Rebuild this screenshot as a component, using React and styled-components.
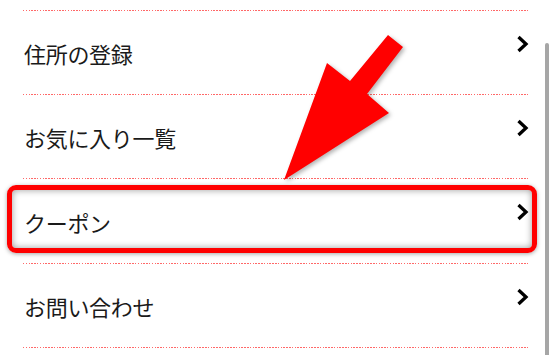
import styled, { createGlobalStyle } from 'styled-components';

const GlobalStyle = createGlobalStyle`
  html, body {
    margin: 0;
    padding: 0;
    background: #fff;
  }
  body {
    font-family: "Noto Sans CJK JP", "Noto Sans", sans-serif;
    color: #1a1a1a;
  }
`;

const items = [
  { label: '住所の登録' },
  { label: 'お気に入り一覧' },
  { label: 'クーポン', highlighted: true },
  { label: 'お問い合わせ' },
];

export default function App() {
  return (
    <>
      <GlobalStyle />
      <Page>
        <MenuList>
          {items.map(item => (
            <MenuRow key={item.label} $highlighted={item.highlighted}>
              <Label>{item.label}</Label>
              <Chevron />
            </MenuRow>
          ))}
        </MenuList>
        <PointerArrow />
        <ScrollThumb />
      </Page>
    </>
  );
}

function Chevron() {
  return (
    <ChevronIcon width="13" height="18" viewBox="0 0 13 18">
      <polyline points="2.5,2 10,9 2.5,16" />
    </ChevronIcon>
  );
}

function PointerArrow() {
  return (
    <ArrowSvg width="553" height="355" viewBox="0 0 553 355">
      <polygon points="388,35 403,47 367,94 389,113 284,180 327,63 350,81" />
    </ArrowSvg>
  );
}

const dots = `repeating-linear-gradient(
  to right,
  #ff6868 0,
  #ff6868 1.5px,
  transparent 1.5px,
  transparent 2.8px
)`;

const Page = styled.div`
  position: relative;
  width: 553px;
  height: 355px;
  overflow: hidden;
`;

const MenuList = styled.ul`
  list-style: none;
  margin: 10px 0 0 23px;
  padding: 0 0 1px;
  width: 507px;
  background: ${dots} left bottom / 100% 1px no-repeat;
`;

const MenuRow = styled.li`
  position: relative;
  display: flex;
  align-items: center;
  justify-content: space-between;
  box-sizing: border-box;
  height: 84px;
  padding: 1px 1px 0 1px;
  background: ${dots} left top / 100% 1px no-repeat;

  ${p =>
    p.$highlighted &&
    `
    height: 85px;
    &::after {
      content: '';
      position: absolute;
      left: -16px;
      top: 7px;
      width: 520px;
      height: 58px;
      border: 5px solid #ff0000;
      border-radius: 9px;
      box-shadow: 0 1px 4px rgba(0, 0, 0, 0.35), inset 0 0 7px rgba(0, 0, 0, 0.4);
      pointer-events: none;
    }
  `}
`;

const Label = styled.span`
  font-size: 22px;
  line-height: 1;
  letter-spacing: -0.3px;
  margin-top: 1px;
`;

const ChevronIcon = styled.svg`
  align-self: flex-start;
  margin-top: 24px;
  fill: none;
  stroke: #000;
  stroke-width: 3.3;
  stroke-linejoin: miter;
  stroke-linecap: butt;
`;

const ArrowSvg = styled.svg`
  position: absolute;
  left: 0;
  top: 0;
  pointer-events: none;
  filter: drop-shadow(2px 2px 2px rgba(0, 0, 0, 0.3));

  polygon {
    fill: #ff0000;
  }
`;

const ScrollThumb = styled.div`
  position: absolute;
  left: 545px;
  top: 43px;
  width: 4px;
  height: 330px;
  border-radius: 2px;
  background: #a6a6a6;
`;
